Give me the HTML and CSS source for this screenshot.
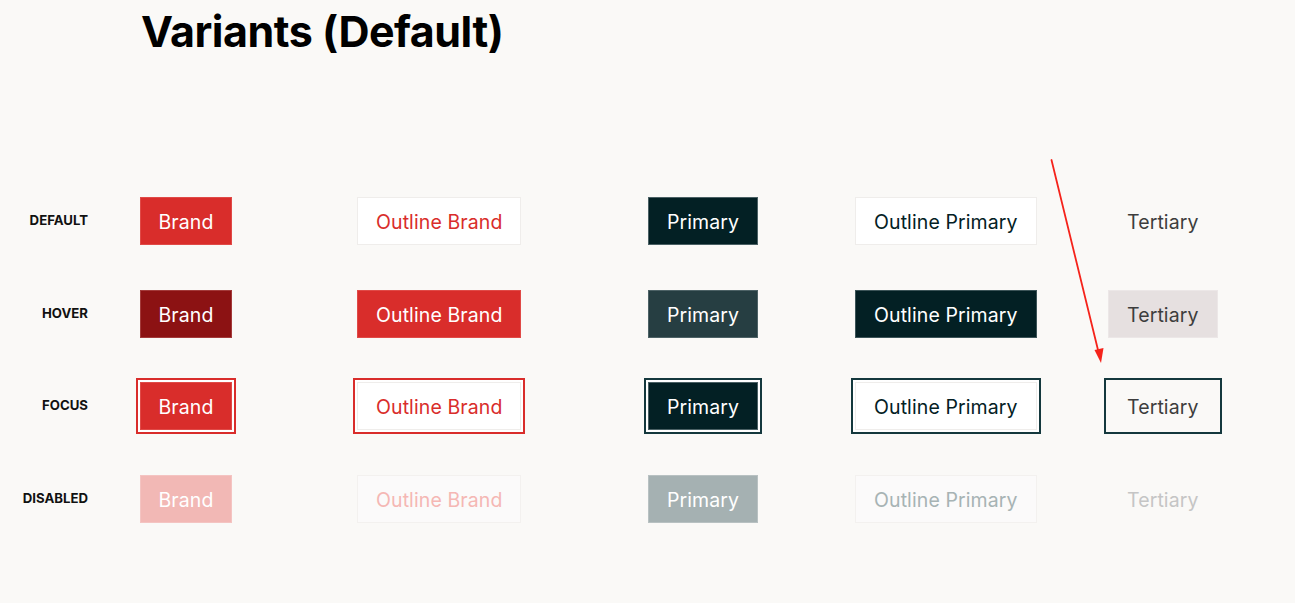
FILE: index.html
```html
<!DOCTYPE html>
<html lang="en">
<head>
<meta charset="utf-8">
<title>Variants (Default)</title>
<link rel="stylesheet" href="styles.css">
</head>
<body>
<main class="page">
  <h1 class="title">Variants (Default)</h1>
  <div class="matrix">
    <div class="state">Default</div>
    <div class="cell"><span class="btn brand">Brand</span></div>
    <div class="cell"><span class="btn outline-brand">Outline Brand</span></div>
    <div class="cell"><span class="btn primary">Primary</span></div>
    <div class="cell"><span class="btn outline-primary">Outline Primary</span></div>
    <div class="cell"><span class="btn tertiary">Tertiary</span></div>

    <div class="state">Hover</div>
    <div class="cell"><span class="btn brand hover">Brand</span></div>
    <div class="cell"><span class="btn outline-brand hover">Outline Brand</span></div>
    <div class="cell"><span class="btn primary hover">Primary</span></div>
    <div class="cell"><span class="btn outline-primary hover">Outline Primary</span></div>
    <div class="cell"><span class="btn tertiary hover">Tertiary</span></div>

    <div class="state">Focus</div>
    <div class="cell"><span class="btn brand focus">Brand</span></div>
    <div class="cell"><span class="btn outline-brand focus">Outline Brand</span></div>
    <div class="cell"><span class="btn primary focus">Primary</span></div>
    <div class="cell"><span class="btn outline-primary focus">Outline Primary</span></div>
    <div class="cell"><span class="btn tertiary focus">Tertiary</span></div>

    <div class="state">Disabled</div>
    <div class="cell"><span class="btn brand disabled">Brand</span></div>
    <div class="cell"><span class="btn outline-brand disabled">Outline Brand</span></div>
    <div class="cell"><span class="btn primary disabled">Primary</span></div>
    <div class="cell"><span class="btn outline-primary disabled">Outline Primary</span></div>
    <div class="cell"><span class="btn tertiary disabled">Tertiary</span></div>
  </div>
</main>
<svg class="annot-arrow" width="70" height="220" viewBox="1040 150 70 220" aria-hidden="true">
  <line x1="1051.5" y1="160" x2="1098.5" y2="352" stroke="#f5231b" stroke-width="1.8" stroke-linecap="round"/>
  <polygon points="1101,363 1094.5,350 1103.5,348" fill="#f5231b"/>
</svg>
</body>
</html>
```

FILE: styles.css
```css
* { box-sizing: border-box; }

html, body {
  margin: 0;
  padding: 0;
  background: #faf9f7;
}

body {
  font-family: Inter, "Noto Sans", "Liberation Sans", sans-serif;
  color: #000;
  width: 1295px;
  height: 603px;
  overflow: hidden;
  position: relative;
}

.page {
  display: flex;
  flex-direction: column;
}

.title {
  margin: 9px 0 0 141px;
  font-size: 43px;
  line-height: 44px;
  font-weight: 700;
  letter-spacing: -0.5px;
  color: #000;
}

.matrix {
  margin-top: 144px;
  display: grid;
  grid-template-columns: 88px 52px 217px 291px 207px 253px 1fr;
  grid-template-rows: repeat(4, 48px);
  row-gap: 44.5px;
  align-items: center;
}

.state {
  grid-column: 1;
  text-align: right;
  font-size: 13.2px;
  font-weight: 700;
  text-transform: uppercase;
  color: #111;
  letter-spacing: 0;
  margin-top: -2px;
}

.cell {
  display: flex;
  justify-content: flex-start;
  align-items: center;
}

.state + .cell { grid-column: 3; }

.btn {
  --ring: #d92d2b;
  --gap: #ffffff;
  display: inline-flex;
  align-items: center;
  justify-content: center;
  height: 48px;
  padding: 2px 18px 0;
  border: 1px solid transparent;
  font-size: 19.5px;
  font-weight: 400;
  letter-spacing: 0.1px;
  white-space: nowrap;
}

.brand { padding-left: 17.5px; padding-right: 17.5px; }

/* Brand */
.brand { background: #d92d2b; border-color: #e04a47; color: #fff; }
.brand.hover { background: #8c1213; border-color: #a33a3a; }
.brand.disabled { background: #f2b8b5; border-color: #f4c4c2; }

/* Outline brand */
.outline-brand { background: #fff; border-color: #efedeb; color: #d92d2b; }
.outline-brand.hover { background: #d92d2b; border-color: #e04a47; color: #fff; }
.outline-brand.disabled { background: #fbfafa; border-color: #f3f1ef; color: #f5b7b4; }

/* Primary */
.primary { background: #032024; border-color: #4a6064; color: #fff; --ring: #14383d; }
.primary.hover { background: #263e42; border-color: #4d6266; }
.primary.disabled { background: #a5b1b2; border-color: #b8c1c2; }

/* Outline primary */
.outline-primary { background: #fff; border-color: #efedeb; color: #032024; --ring: #14383d; }
.outline-primary.hover { background: #032024; border-color: #3c5458; color: #fff; }
.outline-primary.disabled { background: #fbfafa; border-color: #f3f1ef; color: #a7b3b4; }

/* Tertiary */
.tertiary { padding-left: 18px; padding-right: 18px; background: transparent; color: #3d3d3d; --ring: #14383d; --gap: transparent; }
.tertiary.hover { background: #e6e0e0; border-color: #ece7e7; }
.tertiary.disabled { color: #c5c5c5; }

.focus {
  box-shadow: 0 0 0 2px var(--gap), 0 0 0 4px var(--ring);
}
.tertiary.focus {
  box-shadow: 0 0 0 2px #faf9f7, 0 0 0 4px var(--ring);
}

.annot-arrow {
  position: absolute;
  left: 1040px;
  top: 150px;
}
```
